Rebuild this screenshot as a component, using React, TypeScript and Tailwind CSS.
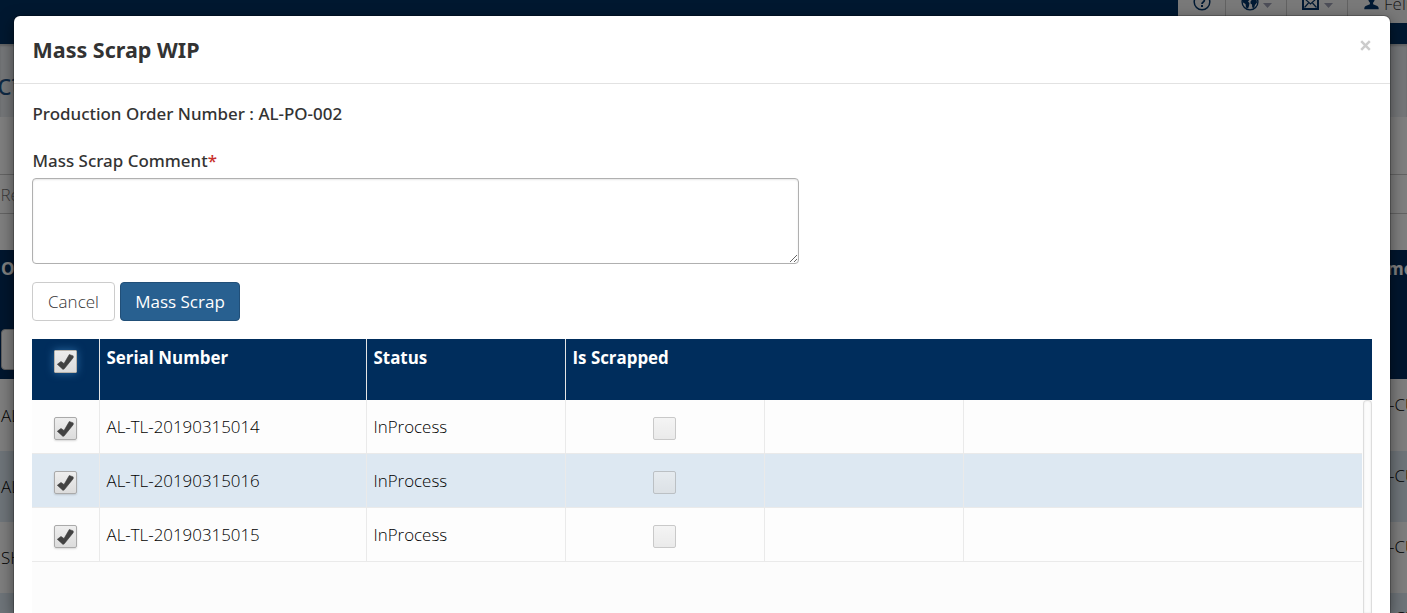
const FONT = "font-['Open_Sans','Noto_Sans',sans-serif]";
const NOTO = "font-['Noto_Sans','Open_Sans',sans-serif]";

const rows = [
  { serial: "AL-TL-20190315014", status: "InProcess" },
  { serial: "AL-TL-20190315016", status: "InProcess" },
  { serial: "AL-TL-20190315015", status: "InProcess" },
];

function Caret() {
  return (
    <svg width="9" height="5" viewBox="0 0 9 5" className="mt-[3px] shrink-0">
      <path d="M0 0h9L4.500 5z" fill="#9a9cb0" />
    </svg>
  );
}

function HelpIcon() {
  return (
    <svg width="18" height="18" viewBox="0 0 18 18" fill="none" stroke="#003366">
      <circle cx="9" cy="9" r="7.800" strokeWidth="1.500" />
      <path d="M6.400 7a2.500 2.400 0 1 1 3.900 1.900c-.9.600-1.300 1-1.300 2.100" strokeWidth="1.800" />
      <path d="M9 12v2" strokeWidth="2" />
    </svg>
  );
}

function GlobeIcon() {
  return (
    <svg width="18" height="18" viewBox="0 0 18 18">
      <circle cx="9" cy="9" r="7.900" fill="none" stroke="#003366" strokeWidth="1.400" />
      <path d="M1.500 7 4 3l4-1.500 2 1-.5 3L7 8.500l1.500 1.500-.5 3-1 2.500-2-1L4.500 11 2 9.500zM9.500 8.500l2-2.500 4 .5.500 3-2 2.500-1 3-1.800-.5-.2-3-1.500-1z" fill="#003366" />
    </svg>
  );
}

function MailIcon() {
  return (
    <svg width="17" height="14" viewBox="0 0 17 14" fill="none" stroke="#003366">
      <rect x="1" y="1" width="15" height="12" strokeWidth="2" />
      <path d="M2.500 2.500 8.500 8l6-5.500M2.500 11.500l4-4.500M14.500 11.500l-4-4.500" strokeWidth="1.200" />
    </svg>
  );
}

function UserIcon() {
  return (
    <svg width="15" height="16" viewBox="0 0 16 16" preserveAspectRatio="none" fill="#003366">
      <path d="M8 0c2.400 0 3.900 1.800 3.700 4.200-.1 1.900-.9 3.700-2 4.600v1.400l4.500 1.700c.9.400 1.500 1.200 1.500 3.400H.3c0-2.200.6-3 1.500-3.400l4.500-1.700V8.800c-1.100-.9-1.900-2.700-2-4.600C4.100 1.800 5.600 0 8 0z" />
    </svg>
  );
}

function CheckBox({ checked = false, glow = false }: { checked?: boolean; glow?: boolean }) {
  return (
    <span
      className={
        "flex h-[23px] w-[23px] items-center justify-center border " +
        (glow
          ? "rounded-[1px] border-[#b9b4ac] bg-linear-to-b from-[#ececec] to-[#dcdcdc] shadow-[0_0_8px_rgba(60,130,190,0.7)]"
          : checked
            ? "rounded-[2px] border-[#aaaaaa] bg-linear-to-b from-[#eeeeee] to-[#dcdcdc] shadow-[0_1px_2px_rgba(0,0,0,0.15)]"
            : "rounded-[2px] border-[#a0a0a0] bg-linear-to-b from-[#eeeeee] to-[#dcdcdc] opacity-55")
      }
    >
      {checked && (
        <svg width="17" height="16" viewBox="0 0 17 16" className="shrink-0">
          <path
            d="M.3 10.300 4 7.400l3 2.200L12.300.5l3.900 1.400v1.800L7.300 14.800l-1.300.6z"
            fill="#424242"
            stroke="#424242"
            strokeWidth=".6"
          />
        </svg>
      )}
    </span>
  );
}

function Page() {
  const bgRows = ["AL", "AL", "SH", "SH"];
  return (
    <div className="flex h-[613px] w-full flex-col overflow-hidden bg-white">
      <div className="flex h-11 shrink-0 justify-end bg-[#003060]">
        <div className="flex h-[23px] w-[229px] bg-[#f3f3f3] text-[17px] text-[#333]">
          <div className="flex w-[48px] shrink-0 justify-center border-r border-[#c4c4c4] pl-px">
            <div className="-mt-[7px]"><HelpIcon /></div>
          </div>
          <div className="flex w-[61px] shrink-0 gap-[4px] border-r border-[#c4c4c4] pl-[15px]">
            <div className="-mt-[7px]"><GlobeIcon /></div>
            <Caret />
          </div>
          <div className="flex w-[61px] shrink-0 gap-[5px] border-r border-[#c4c4c4] pl-[15px]">
            <div className="-mt-[4px]"><MailIcon /></div>
            <Caret />
          </div>
          <div className="flex shrink-0 gap-[5px] pl-[16px]">
            <div className="-mt-[6px]"><UserIcon /></div>
            <span className="-mt-[7px] font-[360] leading-[21px]">Felix</span>
          </div>
        </div>
      </div>
      <div className="flex h-[73px] shrink-0 items-center bg-[#ebeef2] text-[30px] text-[#1c5288] shadow-[inset_0_2px_2px_rgba(0,0,0,0.18)]">
        <span className="-ml-[3px] mt-[5px]">ct</span>
      </div>
      <div className="h-[57px] shrink-0" />
      <div className="flex h-10 shrink-0 items-center border-y border-[#c6c6c6] text-[17px] text-[#777]">
        <span className="pl-[.5px] pt-px font-[360]">Results</span>
      </div>
      <div className="h-9 shrink-0" />
      <div className="flex h-[129px] shrink-0 justify-between bg-[#002d5c] text-[17px] font-bold text-white">
        <div className="flex w-24 flex-col pl-px pt-[8px]">
          <span className="leading-[22px]">Order</span>
          <div className="mt-[49px] h-[41px] rounded-[4px] border border-[#bbb] bg-white" />
        </div>
        <div className="w-[20px] pt-[8px] leading-[22px]">ment</div>
      </div>
      {bgRows.map((label, i) => (
        <div
          key={i}
          className={
            "flex h-[71px] shrink-0 items-center justify-between text-[17px] font-[360] text-black " +
            (i % 2 ? "bg-[#dde8f2]" : "bg-[#fcfcfc]") +
            (i === 0 ? " mt-px" : "")
          }
        >
          <span className="pl-px">{label}</span>
          <span className="-mt-[22px] w-[18px] whitespace-nowrap">-CU</span>
        </div>
      ))}
    </div>
  );
}

const columns = "grid grid-cols-[67px_267px_199px_199px_199px_1fr]";

function Dialog() {
  return (
    <div className="flex h-[597px] w-[1376px] flex-col rounded-t-[6px] bg-white shadow-[0_5px_15px_rgba(0,0,0,0.5),0_0_0_1px_rgba(0,0,0,0.2)]">
      <div className="flex h-[68px] shrink-0 justify-between border-b border-[#e2e2e2] pl-[18.500px] pr-[18.500px]">
        <h4 className={`${NOTO} pt-[19px] text-[21.500px] font-bold leading-[30px] text-[#333]`}>Mass Scrap WIP</h4>
        <button className="mt-[23.500px] h-[11px] w-[12px]">
          <svg width="11" height="11" viewBox="0 0 11 11">
            <path d="M1.200 1.200l8.600 8.600M9.800 1.200 1.200 9.800" stroke="#cccccc" strokeWidth="2.500" />
          </svg>
        </button>
      </div>
      <div className="flex min-h-0 flex-1 flex-col px-[18px]">
        <p className={`${NOTO} mt-[19px] pl-[.5px] text-[16.950px] font-medium leading-[22px] text-[#333]`}>
          Production Order Number : AL-PO-002
        </p>
        <label className={`${NOTO} mt-[25px] pl-[.5px] text-[16.950px] font-medium leading-[22px] text-[#333]`}>
          Mass Scrap Comment<span className="text-[#c9302c]">*</span>
        </label>
        <textarea className="mt-[6px] h-[86px] w-[767px] shrink-0 rounded-[4px] border border-[#b0b0b0] shadow-[inset_0_1px_2px_rgba(0,0,0,0.1)] outline-none" />
        <div className="mt-[18px] flex gap-[5px] text-[17px] leading-[22px]">
          <button className="h-[39px] w-[83px] rounded-[4px] border border-[#cccccc] bg-white font-[340] text-[#333]">Cancel</button>
          <button className="h-[39px] w-[120px] rounded-[4px] border border-[#214f78] bg-[#286090] text-white">Mass Scrap</button>
        </div>
        <div className={`${columns} mt-[18px] h-[61px] shrink-0 bg-[#002d5c] text-[16.900px] font-bold leading-[22px] text-white`}>
          <div className="flex justify-center pt-[11px]"><CheckBox checked glow /></div>
          <div className="border-l border-[#e4e4e4] pl-[6.500px] pt-[7.500px]">Serial Number</div>
          <div className="border-l border-[#e4e4e4] pl-[6.500px] pt-[7.500px]">Status</div>
          <div className="border-l border-[#e4e4e4] pl-[6.500px] pt-[7.500px]">Is Scrapped</div>
        </div>
        <div className="flex min-h-0 flex-1 bg-[#fcfcfc]">
          <div className="flex w-[1330px] flex-col">
            {rows.map((row, i) => (
              <div
                key={row.serial}
                className={
                  `${columns} h-[54px] border-b border-[#eaeaea] text-[16.900px] font-[360] leading-[22px] text-black ` +
                  (i % 2 ? "bg-[#dde8f2]" : "bg-[#fdfdfd]")
                }
              >
                <div className="flex justify-center pt-[17px]"><CheckBox checked /></div>
                <div className="border-l border-[#eaeaea] pl-[6.500px] pt-[16px]">{row.serial}</div>
                <div className="border-l border-[#eaeaea] pl-[6.500px] pt-[16px]">{row.status}</div>
                <div className="flex justify-center border-l border-[#eaeaea] pr-[1px] pt-[17px]"><CheckBox /></div>
                <div className="border-l border-[#eaeaea]" />
                <div className="border-l border-[#eaeaea]" />
              </div>
            ))}
          </div>
          <div className="ml-px w-[9px] rounded-t-[4px] border border-b-0 border-[#dddddd] bg-[#fcfcfc] shadow-[inset_0_0_2px_rgba(0,0,0,0.1)]" />
        </div>
      </div>
    </div>
  );
}

export default function App() {
  return (
    <div className={`${FONT} relative h-[613px] w-full overflow-hidden`}>
      <Page />
      <div className="absolute inset-0 flex items-start bg-black/50 pl-[14px] pt-4">
        <Dialog />
      </div>
    </div>
  );
}
